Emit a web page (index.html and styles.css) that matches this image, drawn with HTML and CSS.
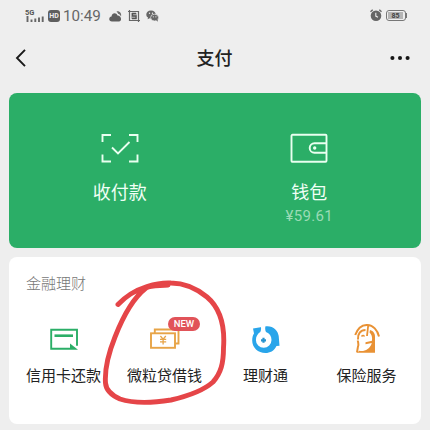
FILE: index.html
```html
<!DOCTYPE html>
<html lang="zh-CN">
<head>
<meta charset="utf-8">
<title>支付</title>
<link rel="stylesheet" href="styles.css">
</head>
<body>
<div class="status">
  <svg class="signal" width="20" height="14" viewBox="0 0 20 14"><text class="net" x="0" y="6">5G</text><path d="M2.500 7v6M6.500 10.500V13M10.300 9.500V13M14 8.500V13M17.700 7.500V13" stroke="#666" stroke-width="1.900"/></svg>
  <span class="hd">HD</span>
  <span class="time">10:49</span>
  <svg class="cloud" width="13" height="12" viewBox="0 0 13 12"><path d="M3 11.500C-.7 11.500-.5 6.800 2.500 6.500 3 2.500 7.500 2.500 8.500 5.500 12.800 5.500 13 11.500 10 11.500Z" fill="#5e5e5e"/><path d="M7.500 1.500C10 .5 13 3 12 6.500 11 4.500 10 4 9.300 4 9 3 8.400 2.200 7.500 1.500Z" fill="#6b6b6b"/></svg>
  <svg class="shot" width="12" height="12" viewBox="0 0 12 12"><path d="M0 1.500h10.500V12M1.500 0v10.500H12" fill="none" stroke="#666" stroke-width="1.200"/><path d="M3 3h6v6H3z" fill="#bbb"/><path d="M8 3.500H4.500V6H8v2.500H4" fill="none" stroke="#555" stroke-width="1.300"/></svg>
  <svg class="chat" width="13" height="12" viewBox="0 0 13 12"><path d="M5 .5C2 .5.3 2.300.3 4.500c0 1.500.7 2.500 1.700 3.100L1.600 9.200l2-1 1.400.2C8 8.400 9.700 6.500 9.700 4.500S8 .5 5 .5Z" fill="#666"/><ellipse cx="8.600" cy="7.600" rx="4" ry="3.400" fill="#666" stroke="#eee" stroke-width=".7"/><path d="m10 10 1.800 1.700-.2-2.500" fill="#666"/><g fill="#eee"><circle cx="3.500" cy="3.300" r=".7"/><circle cx="6.500" cy="3.300" r=".7"/><circle cx="7.300" cy="6.800" r=".6"/><circle cx="9.900" cy="6.800" r=".6"/></g></svg>
  <svg class="alarm" width="12" height="13" viewBox="0 0 12 13"><circle cx="6" cy="6.800" r="5.300" fill="#666"/><path d="M.5 2.700 2.700.8M11.500 2.700 9.300.8" stroke="#666" stroke-width="1.400"/><path d="M5.800 3.800v3.300l2.200 1.200" fill="none" stroke="#eee" stroke-width="1.100"/></svg>
  <span class="battery"><span class="level">85</span></span><span class="tip"></span>
</div>
<header class="nav">
  <svg width="12" height="20" viewBox="0 0 12 20"><path d="M10 1.800 2 10l8 8.200" fill="none" stroke="#191919" stroke-width="1.900"/></svg>
  <h1>支付</h1>
  <svg width="20" height="6" viewBox="0 0 20 6" fill="#151515"><circle cx="2.400" cy="3" r="2.050"/><circle cx="10" cy="3" r="2.050"/><circle cx="17.600" cy="3" r="2.050"/></svg>
</header>
<section class="wallet">
  <div class="pay">
    <svg width="38" height="31" viewBox="0 0 38 31" fill="none" stroke="#e9fff0" stroke-width="1.900"><path d="M1.500 9V2H10M28 2h8.500v7M36.500 21.500v7H28M10 28.500H1.500v-7M11 14.500l6 6 11.500-11.500"/></svg>
    <span class="name">收付款</span>
  </div>
  <div class="pay">
    <svg width="38" height="31" viewBox="0 0 38 31" fill="none" stroke="#e9fff0" stroke-width="1.900"><rect x="1.500" y="1.800" width="35" height="27" rx="1"/><path d="M36.500 10.200H24.500a4.800 4.800 0 0 0 0 9.600H36.500"/><circle cx="24.700" cy="15" r="1.700" fill="#e9fff0" stroke="none"/></svg>
    <span class="name">钱包</span>
    <span class="balance">¥59.61</span>
  </div>
</section>
<section class="finance">
  <h2>金融理财</h2>
  <div class="services">
    <div class="service">
      <svg width="32" height="32" viewBox="0 0 32 32"><path d="M22 24.700H3.200V5.700H29v16" fill="none" stroke="#2bae67" stroke-width="1.900"/><path d="M6.500 11.700H25" stroke="#2bae67" stroke-width="2.600"/><path d="M22 19.500 30 25.700h-8Z" fill="#2bae67"/></svg>
      <span>信用卡还款</span>
    </div>
    <div class="service">
      <svg width="32" height="32" viewBox="0 0 32 32" fill="none" stroke="#e7a447" stroke-width="1.900"><path d="M5.800 9V5.500H29.500V19.500H26.500"/><rect x="2" y="9.300" width="24" height="14.500"/><path d="m11.400 12 2.700 3.200L16.800 12M11 15.300h6.200M11 17.900h6.200M14.100 15v5.600" stroke-width="1.300"/></svg>
      <span>微粒贷借钱</span>
      <b class="new">NEW</b>
    </div>
    <div class="service">
      <svg width="32" height="32" viewBox="0 0 32 32"><path d="M3 4.500 10.500 3.300 16 2.300C23 1.500 28 6.500 28.700 12L29.500 21.700 26.500 22C24 27 20 29 15.500 29 8 29 2.200 23.500 2.200 16.500 2.200 13 3 11 4 9.500Z" fill="#29a5ea"/><path d="M10.500 1h5.300c-.9 2.500-.8 5 .2 7 3.500 1.200 5.500 4.200 5.500 8a7.800 7.800 0 1 1-15.600 0c0-3.800 2-6.500 4.400-8 1-2 1-4.500.2-7Z" fill="#fff"/><path d="M13.500 13.800v5M11 16.300h5" stroke="#2693cf" stroke-width="2.200"/></svg>
      <span>理财通</span>
    </div>
    <div class="service">
      <svg width="32" height="32" viewBox="0 0 32 32" fill="none" stroke="#e99235" stroke-width="2"><path d="M4.200 11C7 3.500 12 .8 16.500 1 22 1.200 26.500 6 28 12.500"/><path d="M7 15.500C6.500 10 9.500 6 14.500 6M6.800 16.500C7 19 8.300 20.500 6.800 23.500L6 28.300"/><path d="M17.200 1.500 16 12" stroke-width="1.800"/><path d="M19 6C22.500 7 24.300 9.500 24 13.500V28.800H5.500L8.500 26.800C13 27.800 19 25.500 20.800 19L14.500 20.200V18.200L21 16.800C21.500 13 20.500 10 18.500 8.500Z" fill="#e99235" stroke="none"/><path d="M10.500 12.500c1-1.300 2.200-1.300 3 0" stroke-width="1.400"/></svg>
      <span>保险服务</span>
    </div>
  </div>
</section>
<svg class="marker" width="130" height="130" viewBox="100 275 130 130"><path d="M118 304.500C126 296 136 290 147 286.500 155 284 163 282.500 171 283 184 283 196 288 207 297 220 308 225 327 223.500 348 223.500 363 221 373 213 382 203 391 184 397 171 400 152 403 132 403 120 399 111 395 106 390 105.500 383 104.500 369 109 352 115 337 122 319 132 299 146 288 151 284.500 160 286 168 285" fill="none" stroke="#e54548" stroke-width="4.900" stroke-linecap="round" stroke-linejoin="round"/></svg>
</body>
</html>
```
FILE: styles.css
```css
* { box-sizing: border-box; }
body {
  margin: 0;
  width: 430px;
  height: 430px;
  overflow: hidden;
  position: relative;
  background: #eee;
  color: #222;
  font-family: Roboto, "Noto Sans CJK SC", sans-serif;
}
svg { display: block; flex: none; }
.status {
  display: flex;
  align-items: center;
  height: 31px;
  padding: 0 23px 0 25px;
  color: #666;
}
.net { font: 700 7.500px Roboto, sans-serif; fill: #555; }
.hd {
  width: 12px;
  height: 12px;
  margin-left: 3px;
  border-radius: 3px;
  background: #5e5e5e;
  color: #eee;
  font: 700 7px/12px Roboto, sans-serif;
  text-align: center;
}
.time {
  width: 38px;
  margin-left: 3px;
  font-size: 15.2px;
  line-height: 32px;
  white-space: nowrap;
}
.cloud { margin-left: 8px; }
.shot { margin-left: 6px; }
.chat { margin-left: 6px; }
.alarm { margin-left: auto; }
.battery {
  width: 20px;
  height: 11px;
  margin-left: 4px;
  padding: 1px;
  border: 1px solid #777;
  border-radius: 3px;
}
.level {
  display: block;
  width: 15px;
  height: 7px;
  background: #b5b5b5;
  color: #444;
  font: 700 7px/8px Roboto, sans-serif;
  text-align: center;
}
.tip { width: 1px; height: 5px; background: #777; }
.nav {
  display: flex;
  align-items: center;
  justify-content: space-between;
  height: 53px;
  padding: 0 20px 0 15px;
}
.nav h1 {
  margin: 2px 0 0 12px;
  font-size: 18px;
  font-weight: 500;
  line-height: 26px;
}
.wallet {
  display: flex;
  height: 155px;
  margin: 9px 9px 0;
  padding: 40px 17px 0 16px;
  border-radius: 8px;
  background: #2bae67;
}
.pay {
  flex: 1;
  display: flex;
  flex-direction: column;
  align-items: center;
}
.name {
  margin-top: 16px;
  color: #f0fff5;
  font-size: 18px;
  line-height: 26px;
}
.balance {
  color: #9adbb5;
  font-size: 15px;
  line-height: 20px;
  letter-spacing: .35px;
}
.finance {
  height: 167px;
  margin: 9px 9px 0;
  padding: 16px 4px 0;
  border-radius: 8px;
  background: #fff;
}
.finance h2 {
  margin: 0 0 0 13px;
  color: #777;
  font-size: 15px;
  font-weight: 300;
  line-height: 22px;
}
.services {
  display: grid;
  grid-template-columns: repeat(4, 1fr);
  margin-top: 29px;
}
.service {
  position: relative;
  display: flex;
  flex-direction: column;
  align-items: center;
  font-size: 15px;
  line-height: 22px;
  white-space: nowrap;
}
.service span { margin-top: 9px; }
.new {
  position: absolute;
  left: 54px;
  top: -7px;
  width: 32px;
  height: 14px;
  border-radius: 7px;
  background: #e15359;
  color: #fff;
  font-size: 9.5px;
  font-weight: 500;
  line-height: 14px;
  text-align: center;
}
.marker { position: absolute; left: 100px; top: 275px; }
```
